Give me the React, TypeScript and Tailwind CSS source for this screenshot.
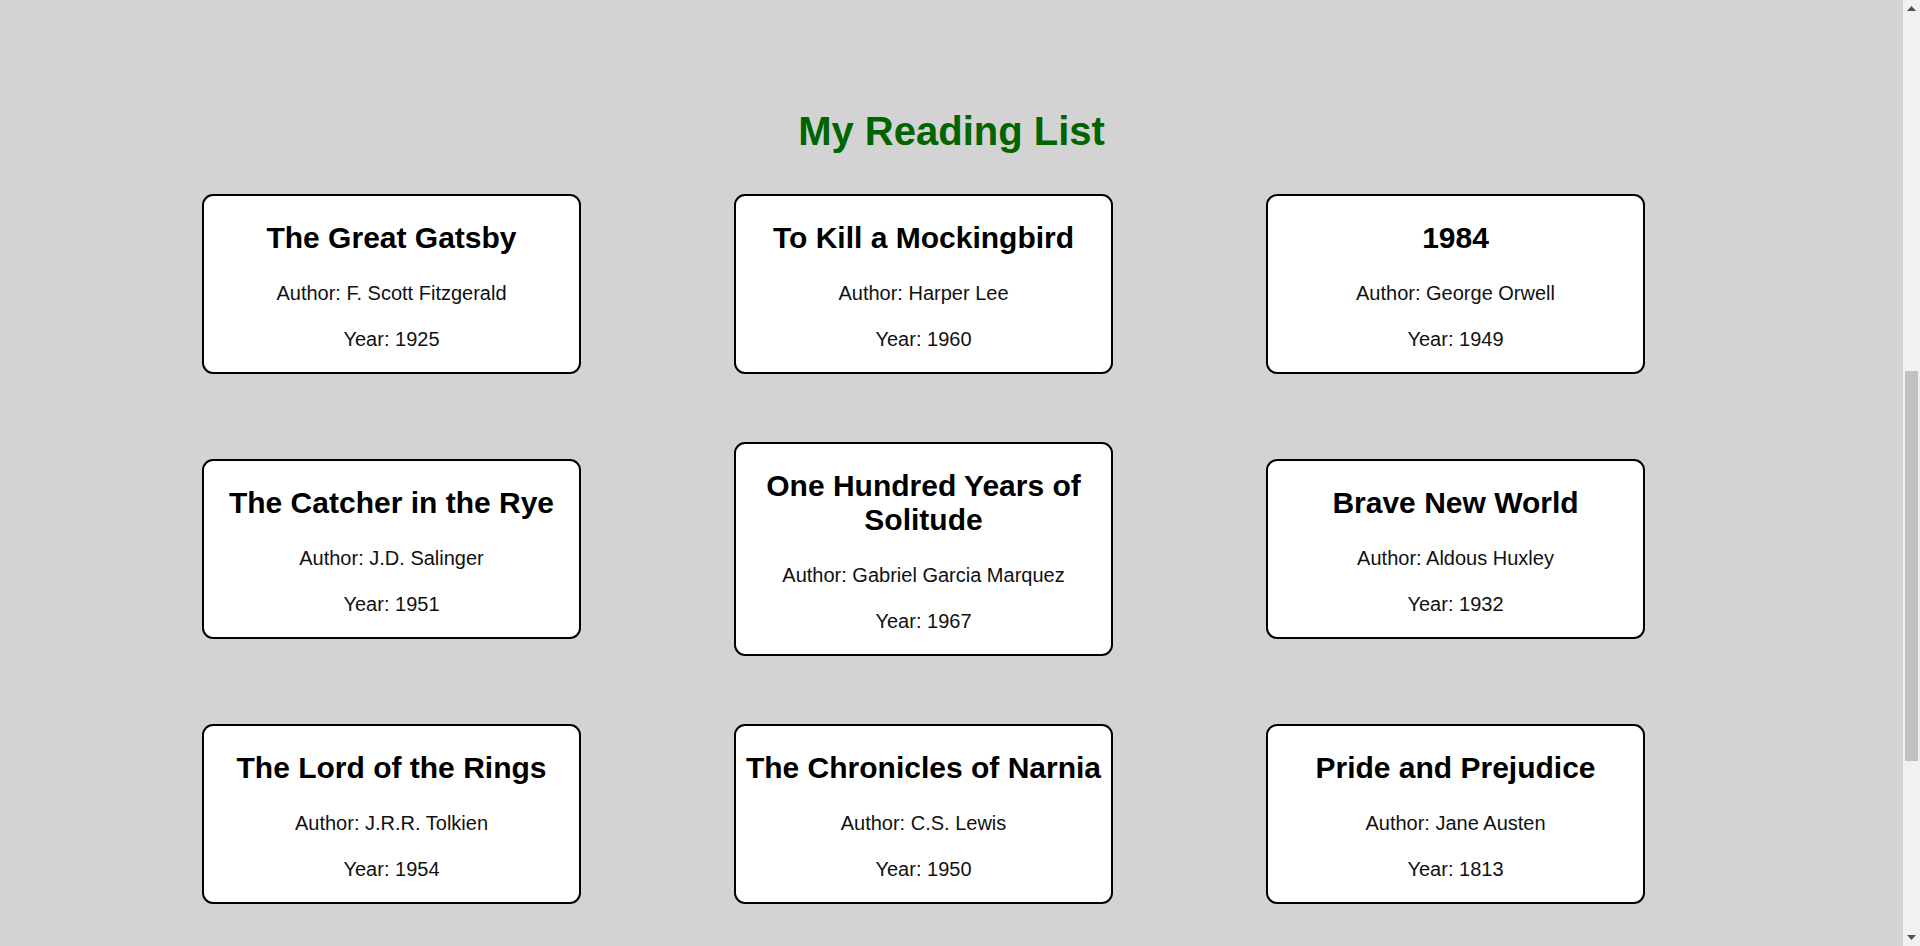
import React from 'react';

type Book = {
  title: string;
  author: string;
  year: number;
};

const books: Book[] = [
  { title: 'The Great Gatsby', author: 'F. Scott Fitzgerald', year: 1925 },
  { title: 'To Kill a Mockingbird', author: 'Harper Lee', year: 1960 },
  { title: '1984', author: 'George Orwell', year: 1949 },
  { title: 'The Catcher in the Rye', author: 'J.D. Salinger', year: 1951 },
  { title: 'One Hundred Years of Solitude', author: 'Gabriel Garcia Marquez', year: 1967 },
  { title: 'Brave New World', author: 'Aldous Huxley', year: 1932 },
  { title: 'The Lord of the Rings', author: 'J.R.R. Tolkien', year: 1954 },
  { title: 'The Chronicles of Narnia', author: 'C.S. Lewis', year: 1950 },
  { title: 'Pride and Prejudice', author: 'Jane Austen', year: 1813 },
];

const BookCard: React.FC<{ book: Book }> = ({ book }) => {
  return (
    <div className="bg-white border-2 border-black rounded-[11px] px-[9px] pt-[25px] pb-[21px] text-center">
      <h2 className="text-[30px] font-bold leading-[normal] text-black">{book.title}</h2>
      <p className="mt-[27px] text-[20px] leading-[normal] text-[#111]">Author: {book.author}</p>
      <p className="mt-[23px] text-[20px] leading-[normal] text-[#111]">Year: {book.year}</p>
    </div>
  );
};

// window scrollbar as it shows in the screenshot (page scrolled part way)
const Scrollbar: React.FC = () => {
  return (
    <aside className="w-[17px] shrink-0 bg-[#f1f1f1] flex flex-col">
      <div className="h-[17px] flex items-center justify-center">
        <svg width="9" height="5" viewBox="0 0 9 5">
          <path d="M0 5 L4.5 0 L9 5 Z" fill="#505050" />
        </svg>
      </div>
      <div className="flex-1 pt-[354px] px-[2px]">
        <div className="h-[390px] bg-[#c1c1c1]" />
      </div>
      <div className="h-[17px] flex items-center justify-center">
        <svg width="9" height="5" viewBox="0 0 9 5">
          <path d="M0 0 L4.5 5 L9 0 Z" fill="#505050" />
        </svg>
      </div>
    </aside>
  );
};

const App: React.FC = () => {
  return (
    <div className="h-screen flex overflow-hidden font-['Liberation_Sans',Arial,sans-serif]">
      <main className="flex-1 bg-[#d3d3d3]">
        <h1 className="pt-[108px] text-center text-[40px] font-bold leading-[46px] text-[#006400]">
          My Reading List
        </h1>
        <div className="mt-[40px] pl-[202px] grid grid-cols-[379px_379px_379px] gap-x-[153px] gap-y-[68px] items-center">
          {books.map((book) => (
            <BookCard key={book.title} book={book} />
          ))}
        </div>
      </main>
      <Scrollbar />
    </div>
  );
};

export default App;
